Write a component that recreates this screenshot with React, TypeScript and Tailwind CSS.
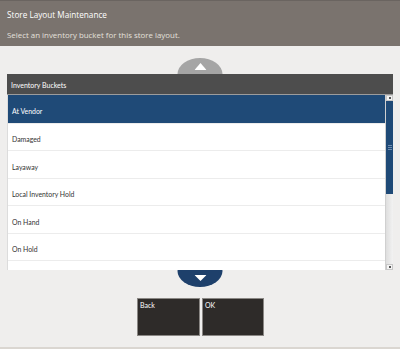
import React from "react";

const rows = ["At Vendor", "Damaged", "Layaway", "Local Inventory Hold", "On Hand", "On Hold", ""];

export default function App() {
  return (
    <div
      className="w-[400px] h-[349px] flex flex-col bg-[#efeeed] border-b-2 border-[#dad6d1] overflow-hidden"
      style={{ fontFamily: '"Open Sans", "Noto Sans", sans-serif' }}
    >
      <div className="h-[46px] shrink-0 bg-[#7a736e] border-t border-[#6a6460] pl-[7px] flex flex-col">
        <div className="mt-[8px] text-[8.2px] leading-[12px] text-white">Store Layout Maintenance</div>
        <div className="mt-[8px] text-[7.9px] leading-[12px] text-[#e4e0dc]">
          Select an inventory bucket for this store layout.
        </div>
      </div>

      <div className="relative mt-[28px] mx-[7px] flex flex-col">
        <div className="absolute left-1/2 -translate-x-1/2 -top-[16px] w-[45px] h-[32px] rounded-[50%] bg-[#a5a5a5] flex justify-center pt-[5px]">
          <svg width="12" height="7" viewBox="0 0 12 7">
            <polygon points="6,0 12,7 0,7" fill="#ffffff" />
          </svg>
        </div>
        <div className="absolute left-1/2 -translate-x-1/2 top-[181px] w-[45px] h-[32px] rounded-[50%] bg-[#1e406b] flex justify-center items-end pb-[6px]">
          <svg width="12" height="6" viewBox="0 0 12 6">
            <polygon points="0,0 12,0 6,6" fill="#ffffff" />
          </svg>
        </div>
        <div
          className="relative h-[21px] bg-[#4d4d4d] border-b border-[#9c9c9c] pl-[4px] pt-[3px] flex items-center text-[7px] text-white"
          style={{ fontFamily: 'Lato, "Open Sans", sans-serif' }}
        >
          Inventory Buckets
        </div>
        <div
          className="relative h-[175px] flex bg-white border-l border-[#dcdcdc]"
          style={{ fontFamily: 'Lato, "Open Sans", sans-serif' }}
        >
          <div className="flex-1 flex flex-col overflow-hidden">
            {rows.map((r, i) => (
              <div
                key={i}
                className={
                  i === 0
                    ? "h-[27.5px] shrink-0 bg-[#1f4a77] text-white text-[6.9px] pl-[4px] pt-[5px] flex items-center"
                    : "h-[27.5px] shrink-0 border-t border-[#ececec] text-[#333333] text-[6.9px] pl-[4px] pt-[5px] flex items-center"
                }
              >
                {r}
              </div>
            ))}
          </div>
          <div className="w-[8px] flex flex-col bg-[#e6e6e6] border-l border-[#d0d0d0]">
            <div className="h-[6px] bg-[#f4f4f4] border border-[#c8c8c8] flex items-center justify-center">
              <div className="w-[2px] h-[2px] bg-[#555]" />
            </div>
            <div className="h-[93px] bg-[#1f4a77] flex flex-col items-center justify-center gap-[1px]">
              <div className="w-[4px] h-px bg-[#6f8db0]" />
              <div className="w-[4px] h-px bg-[#6f8db0]" />
              <div className="w-[4px] h-px bg-[#6f8db0]" />
            </div>
            <div className="flex-1 bg-gradient-to-r from-[#dedede] to-[#f2f2f2]" />
            <div className="h-[6px] bg-[#f4f4f4] border border-[#c8c8c8] flex items-center justify-center">
              <div className="w-[2px] h-[2px] bg-[#555]" />
            </div>
          </div>
        </div>
      </div>

      <div className="mt-[28px] flex justify-center gap-[2px] pl-[1px]" style={{ fontFamily: 'Lato, "Open Sans", sans-serif' }}>
        <div className="w-[63px] h-[38px] bg-[#2e2b29] border border-[#8a8784] text-white text-[7px] leading-[10px] pl-[2px] pt-[1px]">
          Back
        </div>
        <div className="w-[62px] h-[38px] bg-[#2e2b29] border border-[#8a8784] text-white text-[7px] leading-[10px] pl-[2px] pt-[1px]">
          OK
        </div>
      </div>
    </div>
  );
}
